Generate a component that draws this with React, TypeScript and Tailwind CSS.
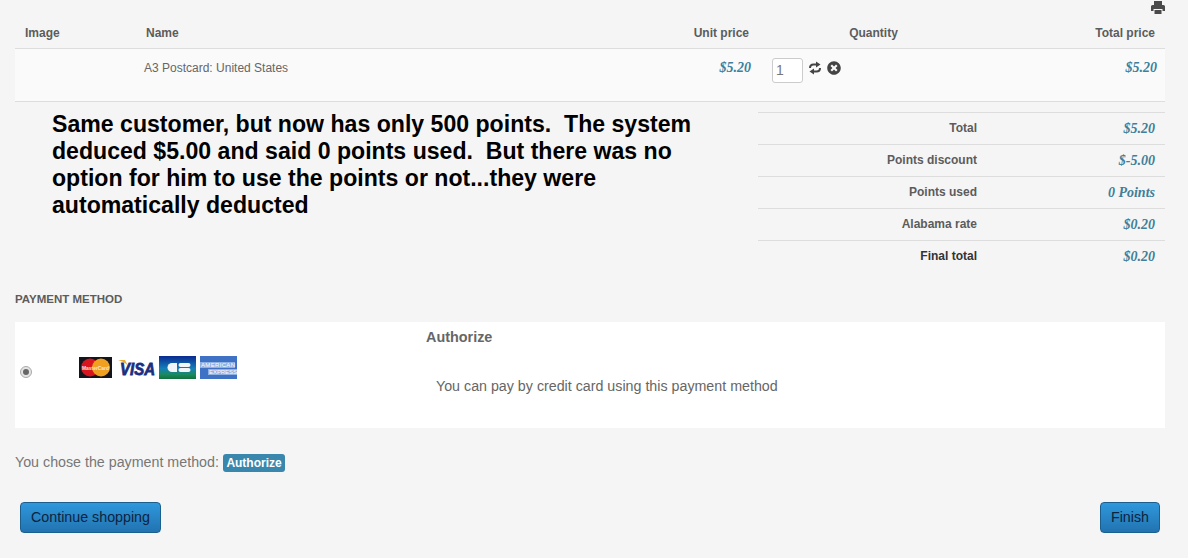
import { FaTimesCircle } from 'react-icons/fa';

const summary = [
	{ label: 'Total', value: '$5.20' },
	{ label: 'Points discount', value: '$-5.00' },
	{ label: 'Points used', value: '0 Points' },
	{ label: 'Alabama rate', value: '$0.20' },
	{ label: 'Final total', value: '$0.20', strong: true },
];

const priceClass = "font-['Liberation_Serif',serif] text-[14px] font-bold italic text-[#3f7f9a]";

function CardLogos() {
	return (
		<div className="flex items-center">
			{/* mastercard */}
			<svg width="33" height="21" viewBox="0 0 33 21">
				<rect width="33" height="21" fill="#14141c" />
				<circle cx="11" cy="10.5" r="9" fill="#d8141e" />
				<circle cx="22" cy="10.5" r="9" fill="#f0a01e" />
				<text x="3" y="12.500" fontFamily="Liberation Sans, sans-serif" fontSize="6" fontWeight="700" fill="#fbe6d0" textLength="27" lengthAdjust="spacingAndGlyphs">MasterCard</text>
			</svg>
			{/* visa */}
			<svg width="38" height="17" viewBox="0 0 38 17" className="ml-[6px] overflow-visible">
				<path d="M0 1h7l3 6C8 4 4 2 0 1z" fill="#e8a92c" />
				<text x="2" y="15.5" fontFamily="Liberation Sans, sans-serif" fontSize="17" fontWeight="700" fontStyle="italic" fill="#1a2f80" stroke="#1a2f80" strokeWidth="0.8" textLength="35" lengthAdjust="spacingAndGlyphs">VISA</text>
			</svg>
			{/* cb */}
			<svg width="37" height="23" viewBox="0 0 37 23" className="ml-[3px]">
				<defs>
					<linearGradient id="cb" x1="0" y1="0" x2="0" y2="1">
						<stop offset="0" stopColor="#0a2a90" />
						<stop offset="0.55" stopColor="#1580b8" />
						<stop offset="0.8" stopColor="#1a8a60" />
						<stop offset="1" stopColor="#14703c" />
					</linearGradient>
				</defs>
				<rect width="37" height="23" fill="url(#cb)" />
				<path d="M18 7h-5a4.5 4.5 0 0 0 0 9h5z" fill="#f2f6f8" />
				<rect x="19.5" y="7" width="12" height="4" rx="2" fill="#f2f6f8" />
				<rect x="19.5" y="12" width="12" height="4" rx="2" fill="#f2f6f8" />
			</svg>
			{/* amex */}
			<svg width="37" height="23" viewBox="0 0 37 23" className="ml-[4px]">
				<rect width="37" height="23" fill="#3f72c4" />
				<rect x="0" y="6" width="35" height="6" fill="#8fb2e2" />
				<rect x="8" y="13" width="29" height="6" fill="#8fb2e2" />
				<text x="1" y="11" fontFamily="Liberation Sans, sans-serif" fontSize="6" fill="#ffffff" textLength="34">AMERICAN</text>
				<text x="9" y="18" fontFamily="Liberation Sans, sans-serif" fontSize="6" fill="#ffffff" textLength="28">EXPRESS</text>
			</svg>
		</div>
	);
}

function BlueButton({ children, className }: { children: string; className: string }) {
	return (
		<button className={`h-[31px] rounded-[4px] border border-[#1b5f8f] bg-gradient-to-b from-[#2f98dc] to-[#2273b0] text-[14.25px] text-[#0c2340] ${className}`}>
			{children}
		</button>
	);
}

export default function App() {
	return (
		<div className="h-[558px] overflow-hidden bg-[#f5f5f5] pl-[15px] pr-[23px] font-['Liberation_Sans',sans-serif] text-[#666666]">
			<div className="flex h-[16px] justify-end pt-[1px] text-[#4a4a4a]">
				<svg width="14" height="13" viewBox="0 0 14 13" fill="currentColor">
					<path d="M3 0h8v4H3z" />
					<path d="M0 5.5A1.5 1.5 0 0 1 1.5 4h11A1.5 1.5 0 0 1 14 5.5V10h-2.5V8h-9v2H0z" />
					<path d="M3.5 9h7v4h-7z" />
				</svg>
			</div>

			<div className="flex h-[33px] items-center border-b border-[#dddddd] pt-[2px] text-[12px] font-bold text-[#5c5c5c]">
				<span className="ml-[10px] w-[121px]">Image</span>
				<span className="w-[470px]">Name</span>
				<span className="w-[133px] text-right">Unit price</span>
				<span className="w-[249px] text-center">Quantity</span>
				<span className="w-[157px] text-right">Total price</span>
			</div>

			<div className="flex h-[53px] items-start border-b border-[#dddddd] bg-[#fafafa] pt-[11px]">
				<span className="ml-[129px] mt-[1px] w-[490px] text-[12px] leading-[15px] text-[#666666]">A3 Postcard: United States</span>
				<span className={`${priceClass} mt-[-1px] w-[117px] text-right leading-[18px]`}>$5.20</span>
				<div className="ml-[21px] mt-[-2px] flex h-[25px] w-[31px] items-center rounded-[3px] border border-[#cccccc] bg-white pl-[3px] text-[14px] text-[#777777]">1</div>
				<svg width="12" height="14" viewBox="0 0 12 14" className="ml-[6px] mt-[1px] text-[#444444]" fill="currentColor">
					<path d="M1 7C1 4.500 2.500 3.500 4.500 3.500H7" fill="none" stroke="currentColor" strokeWidth="2" />
					<path d="M7 0.5L11.5 3.500 7 6.500z" />
					<path d="M11 7C11 9.500 9.500 10.500 7.500 10.500H5" fill="none" stroke="currentColor" strokeWidth="2" />
					<path d="M5 7.500L0.500 10.500 5 13.500z" />
				</svg>
				<FaTimesCircle size={14} className="ml-[6px] mt-[1px] text-[#444444]" />
				<span className={`${priceClass} mt-[-1px] ml-[276px] w-[40px] text-right leading-[18px]`}>$5.20</span>
			</div>

			<div className="flex h-[189px] pt-[10px]">
				<p className="ml-[37px] mt-[-1px] w-[706px] whitespace-pre text-[23.1px] font-bold leading-[27px] text-black">
					{'Same customer, but now has only 500 points.  The system\ndeduced $5.00 and said 0 points used.  But there was no\noption for him to use the points or not...they were\nautomatically deducted'}
				</p>
				<div className="w-[407px]">
					{summary.map((row) => (
						<div key={row.label} className="flex h-[32px] items-start border-t border-[#dddddd] pt-[8px]">
							<span className={`w-[219px] text-right text-[12px] font-bold leading-[14px] ${row.strong ? 'text-[#333333]' : 'text-[#5c5c5c]'}`}>{row.label}</span>
							<span className={`${priceClass} w-[178px] text-right leading-[16px]`}>{row.value}</span>
						</div>
					))}
				</div>
			</div>

			<div className="h-[31px] text-[11.5px] font-bold leading-[17px] text-[#5c5c5c]">PAYMENT METHOD</div>

			<div className="flex h-[106px] bg-white">
				<div className="mt-[44px] ml-[5px] flex h-[12px] w-[12px] items-center justify-center self-start rounded-full border border-[#aaaaaa] bg-[#e4e4e4]">
					<div className="h-[6px] w-[6px] rounded-full bg-[#666666]" />
				</div>
				<div className="ml-[47px] mt-[34px] w-[347px]">
					<CardLogos />
				</div>
				<div className="pt-[7px]">
					<div className="text-[14.4px] font-bold leading-[16px] text-[#666666]">Authorize</div>
					<div className="ml-[10px] mt-[33px] text-[14.25px] leading-[16px] text-[#666666]">You can pay by credit card using this payment method</div>
				</div>
			</div>

			<div className="mt-[26px] flex h-[18px] items-center text-[14.25px] text-[#777777]">
				You chose the payment method:
				<span className="ml-[4px] rounded-[3px] bg-[#3a87ad] px-[3.5px] text-[12px] font-bold leading-[18px] text-white">Authorize</span>
			</div>

			<div className="mt-[30px] flex justify-between pl-[5px] pr-[5px]">
				<BlueButton className="w-[141px]">Continue shopping</BlueButton>
				<BlueButton className="w-[60px]">Finish</BlueButton>
			</div>
		</div>
	);
}
